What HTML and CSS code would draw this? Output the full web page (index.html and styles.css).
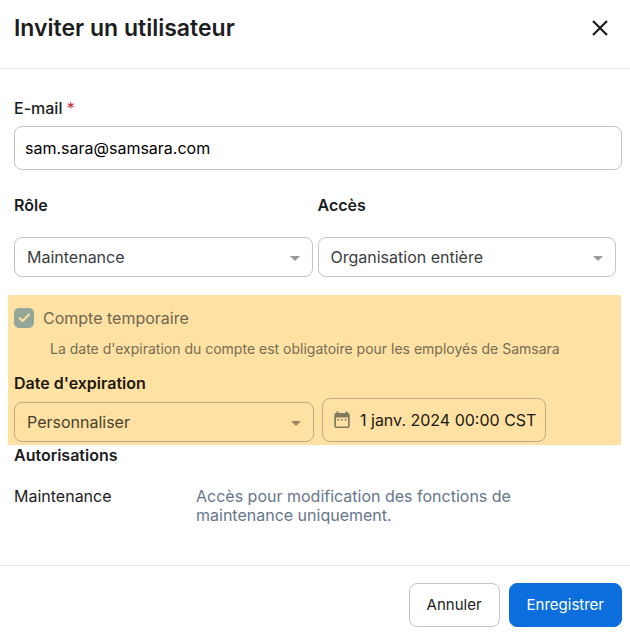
FILE: index.html
```html
<!DOCTYPE html>
<html lang="fr">
<head>
    <meta charset="UTF-8">
    <meta name="viewport" content="width=device-width, initial-scale=1.0">
    <title>Inviter un utilisateur</title>
    <link rel="stylesheet" href="styles.css">
</head>
<body>
    <form class="dialog">
        <header class="dialog-header">
            <h1>Inviter un utilisateur</h1>
            <button type="button" class="close-button" aria-label="Fermer">
                <svg width="20" height="20" viewBox="0 0 20 20" fill="none" stroke="currentColor" stroke-width="2.2">
                    <path d="M3 3L17 17M17 3L3 17"/>
                </svg>
            </button>
        </header>

        <main class="dialog-body">
            <div class="field email-field">
                <label for="email">E-mail <span class="required">*</span></label>
                <input type="email" id="email" class="text-input" value="sam.sara@samsara.com" required>
            </div>

            <div class="field-row">
                <div class="field">
                    <label for="role">Rôle</label>
                    <div class="select-wrap">
                        <select id="role">
                            <option>Maintenance</option>
                        </select>
                    </div>
                </div>
                <div class="field">
                    <label for="access">Accès</label>
                    <div class="select-wrap">
                        <select id="access">
                            <option>Organisation entière</option>
                        </select>
                    </div>
                </div>
            </div>

            <section class="expiration">
                <label class="checkbox-row">
                    <input type="checkbox" checked disabled>
                    <svg class="check" width="20" height="20" viewBox="0 0 20 20" fill="none" stroke="currentColor" stroke-width="2">
                        <path d="M5 9.5L8.5 13L15.5 6"/>
                    </svg>
                    <span>Compte temporaire</span>
                </label>
                <p class="hint">La date d'expiration du compte est obligatoire pour les employés de Samsara</p>
                <label class="expiration-label" for="expiration">Date d'expiration</label>
                <div class="date-row">
                    <div class="select-wrap">
                        <select id="expiration">
                            <option>Personnaliser</option>
                        </select>
                    </div>
                    <button type="button" class="date-button">
                        <svg width="16" height="18" viewBox="0 0 16 18" fill="currentColor">
                            <path fill-rule="evenodd" d="M2.5 0.5H4.5V2H11.5V0.5H13.5V2H14A1.7 1.7 0 0 1 15.7 3.7V15.3A1.7 1.7 0 0 1 14 17H2A1.7 1.7 0 0 1 0.3 15.3V3.7A1.7 1.7 0 0 1 2 2H2.5ZM2 6.5V15.5H14V6.5Z"/>
                            <path d="M3.5 8H5.3V9.6H3.5ZM7.1 8H8.9V9.6H7.1ZM10.7 8H12.5V9.6H10.7Z"/>
                        </svg>
                        <span>1 janv. 2024 00:00 CST</span>
                    </button>
                </div>
            </section>

            <section class="permissions">
                <h2>Autorisations</h2>
                <dl>
                    <dt>Maintenance</dt>
                    <dd>Accès pour modification des fonctions de maintenance uniquement.</dd>
                </dl>
            </section>
        </main>

        <footer class="dialog-footer">
            <button type="button" class="button">Annuler</button>
            <button type="submit" class="button primary">Enregistrer</button>
        </footer>
    </form>
</body>
</html>
```
FILE: styles.css
```css
* {
    box-sizing: border-box;
}
body {
    margin: 0;
    background-color: #fff;
    color: #1b1d22;
    font-family: 'Inter', sans-serif;
    font-size: 16px;
    line-height: 20px;
}
h1, h2, p, dl, dd {
    margin: 0;
}
button, input, select {
    font: inherit;
    color: inherit;
}
button {
    cursor: pointer;
}
.dialog {
    display: flex;
    flex-direction: column;
    min-height: 100vh;
}
.dialog-header {
    display: flex;
    align-items: flex-start;
    justify-content: space-between;
    padding: 16px 20px 28px 14px;
    border-bottom: 1px solid #e1e6ec;
}
h1 {
    font-size: 23px;
    font-weight: 600;
    line-height: 24px;
}
.close-button {
    display: flex;
    padding: 2px 0;
    border: none;
    background: none;
}
.dialog-body {
    flex: 1;
    padding: 29px 8px 0;
}
label, h2 {
    font-size: 16px;
    font-weight: 600;
}
.field {
    display: flex;
    flex-direction: column;
}
.email-field {
    gap: 8px;
    padding-left: 6px;
}
.email-field label {
    font-weight: 500;
}
.required {
    color: #c72c3b;
    font-weight: 400;
}
.text-input {
    width: 100%;
    height: 44px;
    padding: 0 10px;
    border: 1px solid #bdc6d0;
    border-radius: 8px;
    background: none;
    color: #000;
}
.field-row {
    display: grid;
    grid-template-columns: 1fr 1fr;
    gap: 5px;
    padding: 25px 6px 18px;
}
.field-row .field {
    gap: 22px;
}
.select-wrap {
    position: relative;
    color: #3b3d42;
}
.select-wrap::after {
    content: "";
    position: absolute;
    top: 19px;
    right: 13px;
    border: 5px solid transparent;
    border-top-color: #999;
    border-bottom: none;
    pointer-events: none;
}
select {
    display: block;
    width: 100%;
    height: 40px;
    padding: 0 32px 0 12px;
    border: 1px solid #bdc6d0;
    border-radius: 8px;
    background: none;
    appearance: none;
}
.expiration {
    margin-right: 1px;
    padding: 13px 6px 3px;
    background-color: #ffe1a3;
}
.checkbox-row {
    display: grid;
    grid-template-columns: 20px 1fr;
    column-gap: 9px;
    align-items: center;
    color: #6f674f;
    font-weight: 400;
}
.checkbox-row input,
.checkbox-row .check {
    grid-area: 1 / 1;
}
.checkbox-row input {
    width: 20px;
    height: 20px;
    margin: 0;
    border-radius: 5px;
    background-color: #93a798;
    appearance: none;
}
.check {
    color: #ffe1a3;
}
.hint {
    padding: 11px 0 14px 36px;
    color: #756d53;
    font-size: 14px;
}
.expiration-label {
    display: block;
    color: #1c1910;
}
.date-row {
    display: flex;
    align-items: flex-end;
    gap: 8px;
    padding-top: 5px;
}
.date-row .select-wrap {
    flex: 0 1 300px;
    color: #4a412f;
}
.date-row .select-wrap::after {
    border-top-color: #998762;
}
.expiration select,
.date-button {
    border-color: #beaa81;
}
.date-button {
    display: flex;
    align-items: center;
    gap: 10px;
    height: 44px;
    padding: 0 9px 0 11px;
    border-width: 1px;
    border-style: solid;
    border-radius: 8px;
    background: none;
    white-space: nowrap;
    color: #1c1910;
}
.date-button svg {
    color: #817a61;
}
.permissions {
    padding: 0 6px 40px;
}
.permissions dl {
    display: grid;
    grid-template-columns: 182px minmax(0, 340px);
    padding-top: 22px;
    line-height: 19px;
}
.permissions dd {
    color: #66768a;
}
.dialog-footer {
    display: flex;
    justify-content: flex-end;
    gap: 9px;
    padding: 17px 8px 10px;
    border-top: 1px solid #e3e5e8;
}
.button {
    height: 44px;
    padding: 0 17px;
    border: 1px solid #bdc6d0;
    border-radius: 8px;
    background-color: #fff;
    font-size: 15px;
}
.primary {
    border-color: #0d6fde;
    background-color: #0d6fde;
    color: #fff;
}
```
